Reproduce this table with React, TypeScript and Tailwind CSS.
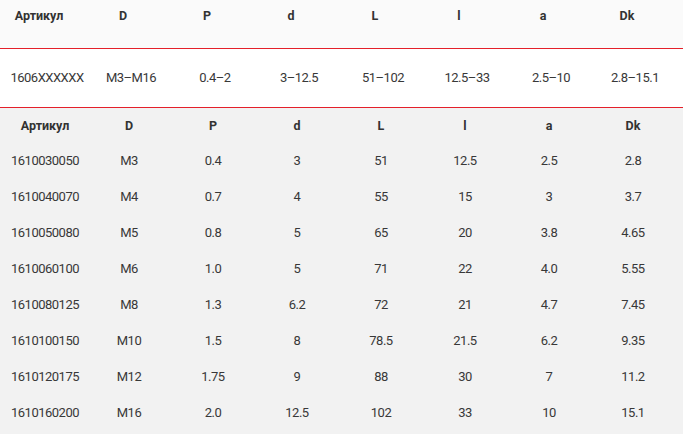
const headers = ['Артикул', 'D', 'P', 'd', 'L', 'l', 'a', 'Dk']

const summary = ['1606XXXXXX', 'M3–M16', '0.4–2', '3–12.5', '51–102', '12.5–33', '2.5–10', '2.8–15.1']

const rows = [
  ['1610030050', 'M3', '0.4', '3', '51', '12.5', '2.5', '2.8'],
  ['1610040070', 'M4', '0.7', '4', '55', '15', '3', '3.7'],
  ['1610050080', 'M5', '0.8', '5', '65', '20', '3.8', '4.65'],
  ['1610060100', 'M6', '1.0', '5', '71', '22', '4.0', '5.55'],
  ['1610080125', 'M8', '1.3', '6.2', '72', '21', '4.7', '7.45'],
  ['1610100150', 'M10', '1.5', '8', '78.5', '21.5', '6.2', '9.35'],
  ['1610120175', 'M12', '1.75', '9', '88', '30', '7', '11.2'],
  ['1610160200', 'M16', '2.0', '12.5', '102', '33', '10', '15.1']
]

const Row = ({ cells, cellClass }: { cells: string[]; cellClass: string }) => (
  <div className="grid grid-cols-[repeat(8,84px)]">
    {cells.map((c, i) => (
      <div key={i} className={'text-center whitespace-nowrap ' + cellClass}>
        {c}
      </div>
    ))}
  </div>
)

export default function App() {
  return (
    <div
      className="h-[434px] w-[683px] overflow-hidden bg-white text-[#383838]"
      style={{ fontFamily: 'Roboto, "Noto Sans", sans-serif' }}
    >
      {/* summary table */}
      <div className="h-[48px] bg-[#fafafa] pt-[7px]">
        <Row cells={headers} cellClass="pr-[6px] text-[12.5px] leading-[18px] font-bold text-[#333]" />
      </div>
      <div className="h-px bg-[#e4202a]" />
      <div className="flex h-[58px] items-center">
        <Row cells={summary} cellClass="pl-[10px] text-[13px] leading-[18px] tracking-[-0.5px]" />
      </div>
      <div className="h-px bg-[#e4202a]" />

      {/* detail table */}
      <div className="h-[326px] bg-[#f2f2f2] pt-[8px]">
        <div className="h-[27px] pt-[1px]">
          <Row cells={headers} cellClass="pl-[6px] text-[12.5px] leading-[18px] font-bold text-[#333]" />
        </div>
        {rows.map((r, i) => (
          <div key={i} className="flex h-[36px] items-center">
            <Row cells={r} cellClass="pl-[6px] text-[13px] leading-[18px] tracking-[-0.5px]" />
          </div>
        ))}
      </div>
    </div>
  )
}
